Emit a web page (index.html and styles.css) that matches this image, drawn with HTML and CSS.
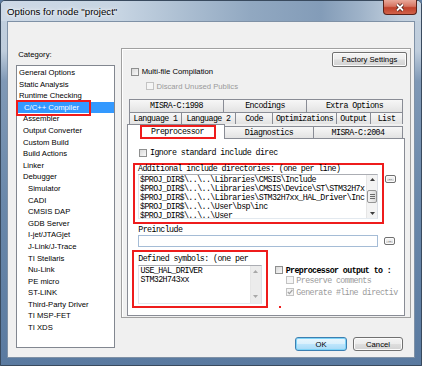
FILE: index.html
```html
<!DOCTYPE html>
<html lang="en">
<head>
    <meta charset="UTF-8">
    <meta name="viewport" content="width=device-width, initial-scale=1.0">
    <title>Options for node "project"</title>
    <link rel="stylesheet" href="styles.css">
</head>
<body>
<div class="window">
    <div class="titlebar">
        <span class="title">Options for node "project"</span>
        <span class="close">
            <svg width="12" height="9" viewBox="0 0 12 9">
                <path d="M3 1.5 L9 7.5 M9 1.5 L3 7.5" stroke="#4a1c14" stroke-width="3.4"/>
                <path d="M3 1.5 L9 7.5 M9 1.5 L3 7.5" stroke="#fff" stroke-width="1.8"/>
            </svg>
        </span>
    </div>
    <div class="frame">
        <div class="client">
            <div class="left">
                <div class="cat-label">Category:</div>
                <ul class="catlist">
                    <li>General Options</li>
                    <li>Static Analysis</li>
                    <li>Runtime Checking</li>
                    <li class="sel">C/C++ Compiler<span class="mark"></span></li>
                    <li class="lv1">Assembler</li>
                    <li class="lv1">Output Converter</li>
                    <li class="lv1">Custom Build</li>
                    <li class="lv1">Build Actions</li>
                    <li class="lv1">Linker</li>
                    <li class="lv1">Debugger</li>
                    <li class="lv2">Simulator</li>
                    <li class="lv2">CADI</li>
                    <li class="lv2">CMSIS DAP</li>
                    <li class="lv2">GDB Server</li>
                    <li class="lv2">I-jet/JTAGjet</li>
                    <li class="lv2">J-Link/J-Trace</li>
                    <li class="lv2">TI Stellaris</li>
                    <li class="lv2">Nu-Link</li>
                    <li class="lv2">PE micro</li>
                    <li class="lv2">ST-LINK</li>
                    <li class="lv2">Third-Party Driver</li>
                    <li class="lv2">TI MSP-FET</li>
                    <li class="lv2">TI XDS</li>
                </ul>
            </div>

            <div class="right">
                <div class="panel">
                    <div class="factory-row">
                        <button class="btn factory">Factory Settings</button>
                    </div>
                    <div class="check-row multi">
                        <span class="box"></span><span class="lbl">Multi-file Compilation</span>
                    </div>
                    <div class="check-row discard disabled">
                        <span class="box"></span><span class="lbl">Discard Unused Publics</span>
                    </div>

                    <div class="tabs">
                        <div class="tab-row row1">
                            <div class="tab t-misra98">MISRA-C:1998</div>
                            <div class="tab t-enc">Encodings</div>
                            <div class="tab t-extra">Extra Options</div>
                        </div>
                        <div class="tab-row row2">
                            <div class="tab t-lang1">Language 1</div>
                            <div class="tab t-lang2">Language 2</div>
                            <div class="tab t-code">Code</div>
                            <div class="tab t-opt">Optimizations</div>
                            <div class="tab t-out">Output</div>
                            <div class="tab t-list">List</div>
                        </div>
                        <div class="tab-row row3">
                            <div class="tab active t-pre"><span class="pre-mark">Preprocessor</span></div>
                            <div class="tab t-diag">Diagnostics</div>
                            <div class="tab t-misra04">MISRA-C:2004</div>
                        </div>

                        <div class="page">
                            <div class="check-row ignore">
                                <span class="box"></span><span class="lbl">Ignore standard include direc</span>
                            </div>

                            <div class="group-row">
                                <div class="group inc-group">
                                    <div class="group-label">Additional include directories: (one per line)</div>
                                    <div class="field inc-field">
                                        <div class="field-text">$PROJ_DIR$\..\..\Libraries\CMSIS\Include
$PROJ_DIR$\..\..\Libraries\CMSIS\Device\ST\STM32H7x
$PROJ_DIR$\..\..\Libraries\STM32H7xx_HAL_Driver\Inc
$PROJ_DIR$\..\..\User\bsp\inc
$PROJ_DIR$\..\..\User</div>
                                        <div class="vscroll">
                                            <div class="arrow"><svg width="5" height="3" viewBox="0 0 5 3"><path d="M0 3 L2.5 0 L5 3Z" fill="#3c3c3c"/></svg></div>
                                            <div class="track"><div class="thumb"><svg width="5" height="5" viewBox="0 0 5 5"><path d="M0 .5H5M0 2.5H5M0 4.5H5" stroke="#6a6a6a" stroke-width="1"/></svg></div></div>
                                            <div class="arrow"><svg width="5" height="3" viewBox="0 0 5 3"><path d="M0 0 L2.5 3 L5 0Z" fill="#3c3c3c"/></svg></div>
                                        </div>
                                    </div>
                                </div>
                                <button class="btn dots dots-inc">..</button>
                            </div>

                            <div class="pre-label">Preinclude</div>
                            <div class="pre-row">
                                <div class="input"></div>
                                <button class="btn dots dots-pre">..</button>
                            </div>

                            <div class="bottom-row">
                                <div class="group def-group">
                                    <div class="group-label">Defined symbols: (one per</div>
                                    <div class="field def-field">
                                        <div class="field-text">USE_HAL_DRIVER
STM32H743xx</div>
                                        <div class="vscroll off">
                                            <div class="arrow"><svg width="5" height="3" viewBox="0 0 5 3"><path d="M0 3 L2.5 0 L5 3Z" fill="#a8a8a8"/></svg></div>
                                            <div class="track"></div>
                                            <div class="arrow"><svg width="5" height="3" viewBox="0 0 5 3"><path d="M0 0 L2.5 3 L5 0Z" fill="#a8a8a8"/></svg></div>
                                        </div>
                                    </div>
                                </div>

                                <div class="out-col">
                                    <div class="check-row out-main">
                                        <span class="box"></span><span class="lbl">Preprocessor output to :</span>
                                    </div>
                                    <div class="check-row sub disabled">
                                        <span class="box"></span><span class="lbl">Preserve comments</span>
                                    </div>
                                    <div class="check-row sub gen disabled">
                                        <span class="box checked">
                                            <svg width="6" height="6" viewBox="0 0 6 6"><path d="M0.8 3 L2.4 4.6 L5.4 1" stroke="#a3a3a3" stroke-width="1.2" fill="none"/></svg>
                                        </span><span class="lbl">Generate #line directiv</span>
                                    </div>
                                    <div class="dot"></div>
                                </div>
                            </div>
                        </div>
                    </div>
                </div>

                <div class="buttons">
                    <button class="btn ok">OK</button>
                    <button class="btn cancel">Cancel</button>
                </div>
            </div>
        </div>
    </div>
</div>
</body>
</html>
```

FILE: styles.css
```css
* {
    box-sizing: border-box;
}
html, body {
    margin: 0;
    padding: 0;
}
body {
    width: 422px;
    height: 366px;
    overflow: hidden;
    font-family: "Liberation Sans", Arial, sans-serif;
    font-size: 7.7px;
    color: #000;
    background: #5f7ea2;
}
.window {
    width: 422px;
    height: 366px;
    border: 1px solid #394a5e;
    border-radius: 5px 5px 0 0;
    background: linear-gradient(to bottom, #c3d1df 0, #bfcddc 50px, #8099b6 80px, #6a88aa 200px, #5a7aa0 100%);
    display: flex;
    flex-direction: column;
}

/* title bar */
.titlebar {
    height: 20px;
    display: flex;
    align-items: center;
    justify-content: space-between;
    padding-left: 6px;
    border-radius: 4px 4px 0 0;
    background: linear-gradient(to right, #cdd9e6 0, #c6d4e2 120px, #a9bcd0 190px, #91a8c1 250px, #839cb8 320px, #9fb3c9 360px, #c2d0de 400px, #c7d4e1 100%);
}
.title {
    font-size: 9.7px;
    text-shadow: 0 0 6px #fff, 0 0 3px #fff;
}
.close {
    align-self: flex-start;
    margin-top: -1px;
    margin-right: 4px;
    width: 34px;
    height: 15px;
    border: 1px solid #5b2219;
    border-top: none;
    border-radius: 0 0 4px 4px;
    background: linear-gradient(to bottom, #e9a99a 0, #d77562 45%, #c0412a 55%, #d1624a 100%);
    display: flex;
    align-items: center;
    justify-content: center;
}

.frame {
    flex: 1;
    padding: 0 6px 7px;
    display: flex;
}
.client {
    width: 408px;
    height: 337px;
    background: #f0f0f0;
    border: 1px solid #7f91a6;
    display: grid;
    grid-template-columns: 99px 290px;
    column-gap: 6px;
    padding-left: 8px;
    align-items: start;
}

/* category list */
.cat-label {
    margin-top: 27.5px;
    padding-left: 2.3px;
    line-height: 10px;
}
.catlist {
    list-style: none;
    margin: 5.5px 0 0;
    padding: 1px 0 0;
    height: 283px;
    background: #fff;
    border: 1px solid #828790;
}
.catlist li {
    height: 11.6px;
    line-height: 11.6px;
    padding-left: 2px;
    white-space: nowrap;
}
.catlist .lv1 {
    padding-left: 6px;
}
.catlist .lv2 {
    padding-left: 11px;
}
.catlist .sel {
    position: relative;
    padding-left: 7px;
    background: #3399ff;
    color: #fff;
}
.sel .mark {
    position: absolute;
    left: -1px;
    top: -2px;
    width: 75px;
    height: 16px;
    border: 2px solid #ee1c1c;
}

/* right side */
.panel {
    margin-top: 26px;
    height: 270px;
    border: 1px solid #a0a0a0;
    box-shadow: inset 1px 1px 0 #fff;
    padding-top: 3px;
}
.factory-row {
    display: flex;
    justify-content: flex-end;
    padding-right: 3px;
    height: 15px;
}

.btn {
    font-family: "Liberation Sans", Arial, sans-serif;
    font-size: 7.7px;
    color: #000;
    padding: 0;
    border: 1px solid #707070;
    border-radius: 2px;
    background: linear-gradient(to bottom, #f4f4f4 0, #ececec 48%, #dedede 52%, #d2d2d2 100%);
    box-shadow: inset 0 0 0 1px #fbfbfb;
}
.factory {
    width: 75px;
    height: 15px;
}

.check-row {
    display: flex;
    align-items: center;
    height: 9px;
    white-space: nowrap;
}
.box {
    flex: none;
    width: 8px;
    height: 8px;
    border: 1px solid #8e8f8f;
    background: linear-gradient(135deg, #d9d9d9, #f9f9f9);
    display: flex;
    align-items: center;
    justify-content: center;
}
.check-row .lbl {
    margin-left: 2.7px;
}
.check-row.disabled .box {
    border-color: #c3c3c3;
    background: #f5f5f5;
}
.check-row.disabled .lbl {
    color: #9a9a9a;
}
.multi {
    padding-left: 9px;
}
.discard {
    margin-top: 5.5px;
    padding-left: 23.7px;
}

/* tabs */
.tabs {
    margin: 8px 0 0 5px;
    width: 278px;
}
.tab-row {
    display: flex;
    align-items: flex-end;
    padding-left: 2px;
}
.tab {
    height: 12px;
    margin-right: -1px;
    border: 1px solid #898c95;
    border-bottom: none;
    background: linear-gradient(to bottom, #f7f7f7, #e3e3e3);
    display: flex;
    align-items: center;
    justify-content: center;
    font-family: "Liberation Mono", "Courier New", monospace;
    font-size: 8.3px;
    letter-spacing: -0.58px;
    white-space: nowrap;
}
.tab:last-child {
    margin-right: 0;
}
.row1 .tab {
    height: 13px;
}
.row3 {
    height: 14px;
    padding-left: 0;
}
.tab.active {
    position: relative;
    z-index: 1;
    height: 15px;
    margin-bottom: -1px;
    background: #fff;
    align-items: flex-start;
}
.pre-mark {
    width: 76px;
    height: 14px;
    margin-left: 3px;
    border: 2px solid #ee1c1c;
    display: flex;
    align-items: center;
    justify-content: center;
}
.t-misra98 { width: 95px; }
.t-enc { width: 84px; }
.t-extra { width: 97px; }
.t-lang1 { width: 53px; }
.t-lang2 { width: 55px; }
.t-code { width: 38px; }
.t-opt { width: 65px; }
.t-out { width: 35px; }
.t-list { width: 33px; }
.t-pre { width: 98px; }
.t-diag { width: 90px; }
.t-misra04 { width: 90px; }

/* tab page */
.page {
    height: 178px;
    border: 1px solid #898c95;
    background: #fff;
    padding-top: 10.3px;
    font-family: "Liberation Mono", "Courier New", monospace;
    font-size: 8.3px;
    letter-spacing: -0.58px;
}
.ignore {
    margin-left: 11.3px;
    height: 8px;
}
.group-row {
    display: flex;
    align-items: flex-start;
    margin: 6px 0 0 4.7px;
}
.group {
    border: 2px solid #ee1c1c;
}
.group-label {
    line-height: 8px;
    white-space: nowrap;
}
.inc-group {
    width: 251px;
    height: 61px;
    padding: 0 3px;
}
.inc-group .group-label {
    padding-left: 0.3px;
}
.field {
    display: flex;
    background: #fff;
    border: 1px solid #abadb3;
    border-color: #abadb3 #dbdfe6 #e3e9ef #e2e3ea;
}
.field-text {
    flex: 1;
    padding: 0 0 0 1.3px;
    line-height: 9px;
    white-space: pre;
}
.inc-field {
    margin-top: 1px;
    width: 240.6px;
    height: 45px;
}
.vscroll {
    flex: none;
    width: 11px;
    display: flex;
    flex-direction: column;
    background: #f3f3f3;
    border-left: 1px solid #e6e6e6;
}
.vscroll .arrow {
    height: 9px;
    display: flex;
    align-items: center;
    justify-content: center;
}
.vscroll .track {
    flex: 1;
}
.thumb {
    margin: 6px 0 0 0;
    height: 13px;
    border: 1px solid #959595;
    border-radius: 2px;
    background: linear-gradient(to right, #f5f5f5, #dadada);
    display: flex;
    align-items: center;
    justify-content: center;
}
.vscroll.off {
    background: #ececec;
}
.vscroll.off .arrow {
    height: 12px;
}

.dots {
    flex: none;
    width: 11px;
    height: 8px;
    font-size: 6px;
    line-height: 5px;
    letter-spacing: 0;
    display: flex;
    align-items: flex-end;
    justify-content: center;
    padding-bottom: 1px;
    overflow: hidden;
}
.dots-inc {
    margin: 12px 0 0 1px;
}

.pre-label {
    margin: 2.7px 0 0 10.3px;
    line-height: 8px;
}
.pre-row {
    display: flex;
    align-items: flex-start;
    margin: 1px 0 0 10.3px;
}
.input {
    width: 240px;
    height: 11.7px;
    border: 1px solid #a5bcd6;
    background: #fff;
}
.dots-pre {
    margin: 1.7px 0 0 6px;
}

.bottom-row {
    display: flex;
    align-items: flex-start;
    margin: 3.3px 0 0 3.7px;
}
.def-group {
    width: 136px;
    height: 57.3px;
    padding: 3px 0 0 4.6px;
}
.def-field {
    margin-top: 1.3px;
    width: 123.4px;
    height: 39px;
}
.out-col {
    margin-left: 7.3px;
    width: 126px;
    padding-top: 15.7px;
}
.out-col .check-row {
    height: 8px;
}
.out-main .lbl {
    font-weight: bold;
}
.out-col .sub {
    margin-top: 2px;
    padding-left: 10.7px;
}
.out-col .gen {
    margin-top: 4px;
}
.dot {
    width: 2px;
    height: 2px;
    margin: 10.3px 0 0 4px;
    background: #ee1c1c;
}

/* dialog buttons */
.buttons {
    display: flex;
    justify-content: flex-end;
    gap: 6px;
    margin-top: 19px;
    padding-right: 8px;
}
.ok, .cancel {
    height: 14px;
    border-radius: 3px;
}
.ok {
    width: 52px;
    border-color: #3c7fb1;
    background: linear-gradient(to bottom, #eaf6fd 0, #d9f0fc 48%, #bee6fd 52%, #a7d9f5 100%);
    box-shadow: inset 0 0 0 1px #7ed3f7;
}
.cancel {
    width: 50px;
}
```
